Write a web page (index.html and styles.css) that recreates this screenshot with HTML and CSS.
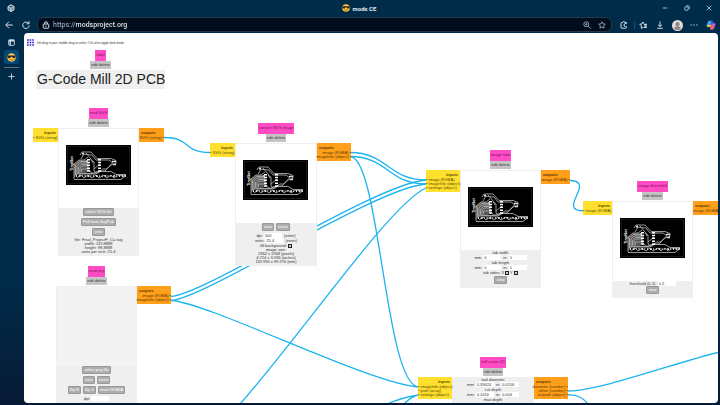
FILE: index.html
```
<!DOCTYPE html>
<html lang="en">
<head>
<meta charset="utf-8">
<title>mods CE</title>
<link rel="stylesheet" href="styles.css">
</head>
<body>
<svg class="defs" aria-hidden="true">
  <symbol id="cool" viewBox="0 0 16 16">
    <circle cx="8" cy="8" r="7.5" fill="#ffc83d"/>
    <path d="M0.8 4.500h14.4v1.5c0 4-5.6 4.2-6.4.7H7.2C6.400 10.200.8 10 .8 6z" fill="#2b2330"/>
    <path d="M4.500 11.500q3.500 3 7 0" fill="none" stroke="#8a4a10" stroke-width="1.400"/>
  </symbol>
  <symbol id="pcb" viewBox="0 0 65 40">
    <rect width="65" height="40" fill="#000"/>
    <rect x="1.500" y="1.500" width="62" height="37" fill="none" stroke="#3a3a3a" stroke-width=".4"/>
    <path d="M8 33V19l5-4h8l2 4v7l-5 3h-6z" fill="#555"/>
    <g fill="none" stroke="#aaa" stroke-width=".9">
      <path d="M14 10l2-3h9l6 6.500h14l5 2v3l-5 1.500-6 6h-5l-4 3H10"/>
      <path d="M16 9l10 1 4 5h13l4 3"/>
      <path d="M15 14l3-5M20 8l5 6 2 4"/>
      <path d="M8 34V19l5-4h5l4-3"/>
      <path d="M9.500 30V20l4-3.500h7"/>
      <path d="M11 29v-8l3-3h7"/>
      <path d="M12.500 28v-6l3-2.500h6"/>
      <path d="M14 27.500V23l2-2h6"/>
      <path d="M15.500 27v-3h7l3 4h7l4-4h4l6-6"/>
      <path d="M13 28.500h15l3-2h14l5 3h8"/>
      <path d="M8 34.500h47l5-4"/>
      <path d="M25 15l3 2v9l3 2M28 24l6-5"/>
      <path d="M11 33l4-3 3 3 4-3 4 3 4-3 3 3 5-3 3 3 4-3 3 3 5-3 4 1"/>
    </g>
    <path d="M10 31h51" stroke="#ddd" stroke-width="2.200" stroke-dasharray="1 1.800 1.700 1.400 .7 2"/>
    <path d="M22.500 14v13M33.500 14v13" stroke="#fff" stroke-width="3" stroke-dasharray="1.500 1.300"/>
    <path d="M16 8.500h2M46 16.500h4M47 19.500h3M20 16h2M59 29v3" stroke="#ddd" stroke-width="1.500"/>
    <text transform="translate(7 26) rotate(-90)" class="silk">TinyBot</text>
  </symbol>
</svg>
<div class="browser">
  <header class="titlebar">
    <button class="icon workspaces" aria-label="Workspaces"><svg viewBox="0 0 16 16"><path d="M2 5l6-3.500L14 5v6.500L8 15l-6-3.500zM2 5l6 3.500L14 5M8 8.500V15" fill="#6d7f90"/></svg></button>
    <div class="tab-title"><svg class="face"><use href="#cool"/></svg><span>mods CE</span></div>
    <div class="window-buttons">
      <button class="icon" aria-label="Minimize"><svg viewBox="0 0 16 16"><path d="M2 8h12"/></svg></button>
      <button class="icon" aria-label="Restore"><svg viewBox="0 0 16 16"><rect x="2" y="5" width="9" height="9" rx="1.500"/><path d="M5.500 2H11q3 0 3 3v6"/></svg></button>
      <button class="icon" aria-label="Close"><svg viewBox="0 0 16 16"><path d="M2 2l12 12M14 2L2 14"/></svg></button>
    </div>
  </header>
  <nav class="toolbar">
    <button class="icon" aria-label="Back"><svg viewBox="0 0 16 16"><path d="M15.500 8H1.500M8 1.500L1.500 8 8 14.500"/></svg></button>
    <button class="icon" aria-label="Reload"><svg viewBox="0 0 16 16"><path d="M13.500 5A6.500 6.500 0 1 0 14.500 9M14 .5V5.500H9"/></svg></button>
    <div class="address">
      <svg viewBox="0 0 16 16"><rect x="2.500" y="6" width="11" height="8.500" rx="1.500"/><path d="M5 6V4.500a3 3 0 0 1 6 0V6M8 9v2.500"/></svg>
      <input class="url" type="text" aria-label="Address" value="https://modsproject.org">
      <button class="icon" aria-label="Zoom"><svg viewBox="0 0 16 16"><circle cx="6.500" cy="6.500" r="5"/><path d="M10 10l5 5M4 6.500h5M6.500 4v5"/></svg></button>
      <button class="icon" aria-label="Favorite"><svg viewBox="0 0 16 16"><path d="M8 1.500l2 4.300 4.700.6-3.500 3.200.9 4.700L8 12l-4.100 2.300.9-4.700L1.300 6.400 6 5.800z"/></svg></button>
    </div>
    <div class="tools">
      <button class="icon" aria-label="Extensions"><svg viewBox="0 0 16 16"><path d="M13 5V3H9.500a2 2 0 0 0-4 0H4Q2 3 2 5v7.500q0 2 2 2h7q2 0 2-2v-1.500H11a2.500 2.500 0 0 1 0-6z"/></svg></button>
      <span class="divider"></span>
      <button class="icon" aria-label="Favorites"><svg viewBox="0 0 16 16"><path d="M9 12.500L4.500 14.500 5 10 1.500 6.500l4.500-.5L8 2l2 3.500M10 7h5M10 10h5M10 13h5"/><path d="M14 5v9"/></svg></button>
      <button class="icon" aria-label="Downloads"><svg viewBox="0 0 16 16"><path d="M8 1v10M4 7.500L8 11l4-3.500M2.500 14.500h11"/></svg></button>
      <button class="icon profile" aria-label="Profile"><svg viewBox="0 0 16 16"><circle cx="8" cy="8" r="8" fill="#e2dfdc" stroke="none"/><circle cx="8" cy="6" r="3" fill="#8b8580" stroke="none"/><path d="M3 13q0-4 5-4t5 4q-5 3-10 0" fill="#8b8580" stroke="none"/></svg></button>
      <button class="icon" aria-label="More"><svg viewBox="0 0 16 16"><path d="M1 8h2.500M6.700 8h2.500M12.400 8h2.500"/></svg></button>
      <button class="icon copilot" aria-label="Copilot"><svg viewBox="0 0 16 16"><g stroke="none"><path d="M5 1h5l-3 10H2Q0 11 1 8l2-5q.5-2 2-2z" fill="#2fa8e8"/><path d="M2 8h6l-1 3H3q-2 0-1-3z" fill="#f5c33b"/><path d="M11 15H6L9 5h5q2 0 1 3l-2 5q-.500 2-2 2z" fill="#d05bd0"/><path d="M7 12l1-4 4 1-1 6H8z" fill="#f0654a"/><path d="M7 1h4l1.500 4H9z" fill="#275bd8"/></g></svg></button>
    </div>
  </nav>
  <aside class="sidebar">
    <button class="icon" aria-label="Tab actions"><svg viewBox="0 0 16 16"><rect x="1.500" y="1.500" width="13" height="13" rx="2"/><path d="M2 4h12M5 4v10" stroke-width="3"/></svg></button>
    <button class="icon current" aria-label="mods CE"><svg class="face"><use href="#cool"/></svg></button>
    <span class="rule"></span>
    <button class="icon" aria-label="New tab"><svg viewBox="0 0 16 16"><path d="M8 1v14M1 8h14"/></svg></button>
  </aside>

  <main class="canvas">
    <div class="hint">
      <button class="menu" aria-label="Menu"><svg viewBox="0 0 7 7"><path d="M0 1h7M0 3.500h7M0 6h7" stroke="#2a20d8" stroke-width="1.600" stroke-dasharray="1.700 .9"/></svg></button>
      <span>left-drag to pan, middle-drag to select, Ctrl+d to toggle dark mode</span>
    </div>

    <svg class="wires" viewBox="24 33 694 370" aria-hidden="true">
      <path d="M164 137.500C192 137.500 182 152.500 210 152.500"/>
      <path d="M350 152.500C388 152.500 388 180 426 180"/>
      <path d="M350 156.500C388 156.500 388 184 426 184"/>
      <path d="M350 156.500C380 156.500 385 387 419 387"/>
      <path d="M171 296.500C206 294 375 184 426 180"/>
      <path d="M171 300.500C206 298 375 188 426 184"/>
      <path d="M171 300.500C210 303 370 384 419 387"/>
      <path d="M240 404C300 337 390 204 426 188"/>
      <path d="M389 403Q408 396 419 395M405 403Q412 396 419 395"/>
      <path d="M569 180.500C598 180.500 555 211 584 211"/>
      <path d="M568 391C600 391 680 361 720 352"/>
      <path d="M568 395Q580 394 588 404"/>
    </svg>

    <section class="node title-node">
      <header><h2>label</h2><div class="edit"><button>edit</button> <button>delete</button></div></header>
      <h1>G-Code Mill 2D PCB</h1>
    </section>

    <section class="node read-svg">
      <header><h2>read SVG</h2><div class="edit"><button>edit</button> <button>delete</button></div></header>
      <div class="port in small"><b>inputs</b><span>• SVG (string)</span></div>
      <div class="port out small"><b>outputs</b><span>SVG (string) •</span></div>
      <div class="body">
        <div class="view"><svg><use href="#pcb"/></svg></div>
        <div class="buttons"><button>select SVG file</button></div>
        <div class="buttons"><button>Pull from SvgPub</button></div>
        <div class="buttons"><button>view</button></div>
        <p>file: Final_ProjectF_Cu.svg</p><p>width: 119.8888</p><p>height: 98.8888</p><p>units per inch: 25.4</p>
      </div>
    </section>

    <section class="node convert">
      <header><h2>convert SVG image</h2><div class="edit"><button>edit</button> <button>delete</button></div></header>
      <div class="port in small"><b>inputs</b><span>• SVG (string)</span></div>
      <div class="port out large"><b>outputs</b><span>image (RGBA) •</span><span>imageInfo (object) •</span></div>
      <div class="body">
        <div class="view"><svg><use href="#pcb"/></svg></div>
        <div class="buttons"><button>view</button><button>invert</button></div>
        <div class="row"><label>dpi: <input type="text" value="500"></label> (enter)</div>
        <div class="row"><label>units: <input type="text" value="25.4"></label> (enter)</div>
        <div class="row"><label>fill background: <input type="checkbox" checked></label></div>
        <p>image size:</p><p>2362 x 1968 (pixels)</p><p>4.724 x 3.936 (inches)</p><p>119.990 x 99.974 (mm)</p>
      </div>
    </section>

    <section class="node tabs">
      <header><h2>image tabs</h2><div class="edit"><button>edit</button> <button>delete</button></div></header>
      <div class="port in large"><b>inputs</b><span>• image (RGBA)</span><span>• imageInfo (object)</span><span>• settings (object)</span></div>
      <div class="port out medium"><b>outputs</b><span>image (RGBA) •</span></div>
      <div class="body">
        <div class="view"><svg><use href="#pcb"/></svg></div>
        <div class="row">tab width</div>
        <div class="row"><label>mm: <input type="text" value="0"></label><label>in: <input type="text" value="0"></label></div>
        <div class="row">tab length</div>
        <div class="row"><label>mm: <input type="text" value="0"></label><label>in: <input type="text" value="0"></label></div>
        <div class="row tight"><label>tab sides: X<input type="checkbox" checked></label><label>Y<input type="checkbox" checked></label></div>
        <div class="buttons"><button>view</button></div>
      </div>
    </section>

    <section class="node threshold">
      <header><h2>image threshold</h2><div class="edit"><button>edit</button> <button>delete</button></div></header>
      <div class="port in medium"><b>inputs</b><span>• image (RGBA)</span></div>
      <div class="port out medium"><b>outputs</b><span>image (RGBA) •</span></div>
      <div class="body">
        <div class="view"><svg><use href="#pcb"/></svg></div>
        <div class="row"><label>threshold (0-1): <input type="text" value="0.5"></label></div>
        <div class="buttons"><button>view</button></div>
      </div>
    </section>

    <section class="node read-png">
      <header><h2>read png</h2><div class="edit"><button>edit</button> <button>delete</button></div></header>
      <div class="port out large"><b>outputs</b><span>image (RGBA) •</span><span>imageInfo (object) •</span></div>
      <div class="body">
        <div class="view empty"></div>
        <div class="buttons"><button>select png file</button></div>
        <div class="buttons"><button>view</button><button>invert</button></div>
        <div class="buttons"><button>flip H</button><button>flip V</button><button>invert RGB/A</button></div>
        <div class="row"><label>dpi: <input type="text"></label></div>
      </div>
    </section>

    <section class="node raster">
      <header><h2>mill raster 2D</h2><div class="edit"><button>edit</button> <button>delete</button></div></header>
      <div class="port in large"><b>inputs</b><span>• imageInfo (object)</span><span>• path (array)</span><span>• settings (object)</span></div>
      <div class="port out large"><b>outputs</b><span>diameter (number) •</span><span>offset (number) •</span><span>outpath (object) •</span></div>
      <div class="body">
        <div class="row">tool diameter</div>
        <div class="row"><label>mm: <input type="text" value="0.39624"></label><label>in: <input type="text" value="0.0156"></label></div>
        <div class="row">cut depth</div>
        <div class="row"><label>mm: <input type="text" value="0.1016"></label><label>in: <input type="text" value="0.004"></label></div>
        <div class="row">max depth</div>
      </div>
    </section>
  </main>
</div>
</body>
</html>
```
FILE: styles.css
```
* { box-sizing: border-box; margin: 0; }
body {
  background: #002b49;
  color: #333;
  font-family: "Liberation Sans", sans-serif;
}
button, input { font: inherit; color: inherit; border: 0; padding: 0; background: none; }
.defs { display: none; }
.silk { font: bold 4px "Liberation Sans", sans-serif; fill: #fff; }

/* Browser frame */
.browser {
  display: grid;
  grid-template: 16px 17px 1fr / 24px 1fr;
  height: 100vh;
  padding: 0 2px 2px 0;
  background: linear-gradient(#002b49 70%, #071a35);
  font-family: Roboto, sans-serif;
}
.icon { display: grid; place-items: center; width: 10px; height: 10px; flex: none; }
.icon svg, .address > svg {
  width: 8px; height: 8px;
  fill: none; stroke: #d3dde5; stroke-width: 2;
}
.titlebar {
  grid-column: 1 / -1;
  display: grid;
  grid-template-columns: 1fr auto 1fr;
  align-items: center;
}
.workspaces { margin-left: 6px; }
.tab-title { display: flex; align-items: center; gap: 3px; color: #e4ecf2; font-size: 6px; font-weight: 700; }
.face { width: 8px; height: 8px; }
.window-buttons { display: flex; justify-content: flex-end; gap: 12px; padding-right: 4px; }
.window-buttons svg { width: 6px; height: 6px; }
.toolbar {
  grid-column: 1 / -1;
  display: flex;
  align-items: center;
  gap: 7px;
  padding-left: 4px;
}
.toolbar > .address {
  flex: 1;
  display: flex;
  align-items: center;
  gap: 5px;
  height: 15px;
  margin-left: -1px;
  padding: 0 4px;
  border: 1px solid #26394c;
  border-radius: 6px;
  background: #000e1c;
}
.address svg { flex: none; }
.address .icon svg { stroke: #8c9aa6; }
.url {
  flex: 1;
  min-width: 0;
  height: 10px;
  margin-left: -2px;
  font-size: 7px;
  font-weight: 500;
  color: transparent;
  background: linear-gradient(90deg, #9aa8b4 22px, #f2f5f8 22px);
  background-clip: text;
}
.tools { display: flex; align-items: center; gap: 7px; padding-right: 2px; }
.divider { width: 1px; height: 8px; margin: 0 -4px 0 -2px; background: #1d4c70; }
.tools .profile svg { width: 11px; height: 11px; }
.tools .copilot svg { width: 10px; height: 10px; }
.sidebar { display: flex; flex-direction: column; align-items: center; gap: 4px; padding: 4px 2px 0 0; }
.sidebar .current { width: 15px; height: 14px; border-radius: 3px; background: #004a78; margin-top: -1px; }
.sidebar .rule { width: 15px; height: 1px; margin: -1px 0; background: #60707c; }
.sidebar .icon svg { width: 7px; height: 7px; }
.sidebar .current svg { width: 9px; height: 9px; stroke: none; }

/* Program canvas */
.canvas {
  position: relative;
  overflow: hidden;
  border-radius: 4px;
  background: #fff;
  font: 4px/4px "Liberation Sans", sans-serif;
}
.hint { display: flex; align-items: center; gap: 3px; padding: 6px 3px; font-size: 3px; }
.menu { width: 7px; height: 7px; }
.menu svg { display: block; width: 7px; height: 7px; }
.wires { position: absolute; left: 0; top: 0; width: 694px; height: 370px; }
.wires path { fill: none; stroke: #1cb4ee; stroke-width: 1.300; }

.node { position: absolute; width: 81px; }
.title-node { left: 12px; top: 17px; width: 129px; }
.read-svg { left: 34px; top: 75px; }
.convert { left: 211px; top: 90px; width: 82px; }
.tabs { left: 436px; top: 117px; }
.threshold { left: 588px; top: 148px; }
.read-png { left: 32px; top: 233px; }
.raster { left: 428px; top: 324px; width: 82px; }

.node header { display: flex; flex-direction: column; align-items: center; height: 20px; }
.node h2 {
  padding: 3px 1px 4px;
  background: #ff4cc4;
  color: #7a1260;
  font-size: 4px;
  font-weight: 400;
  white-space: nowrap;
}
.edit { padding: 2px 1px; background: #c4c4c4; white-space: nowrap; }
.edit button { display: inline; line-height: 4px; vertical-align: top; }
.node h1 {
  padding: 0 1px;
  background: #efefef;
  color: #222;
  font-size: 14px;
  font-weight: 400;
  line-height: 19px;
  text-align: center;
  white-space: nowrap;
}
.body { padding: 0 1px 2px; background: #efefef; text-align: center; }
.view { height: 80px; padding: 16px 7px; background: #fff; border-top: 1px solid #efefef; }
.view svg { display: block; width: 65px; height: 40px; }
.view.empty { background: #f3f3f3; }
.body p { white-space: nowrap; }
.buttons { display: flex; justify-content: center; gap: 2px; padding-bottom: 2px; }
.buttons button {
  height: 8px;
  padding: 0 1px;
  border: 1px solid #999;
  border-radius: 1px;
  background: #adadad;
  color: #fff;
  line-height: 4px;
  white-space: nowrap;
}
.row { display: flex; justify-content: center; align-items: center; gap: 2px; height: 5px; white-space: nowrap; }
.convert .row { height: 5px; }
.row label { display: flex; align-items: center; gap: 1px; }
.row input[type="text"] { width: 18px; height: 5px; padding-left: 1px; background: #fff; }
.row input[type="checkbox"] {
  appearance: none;
  width: 4px; height: 4px;
  border: 1px solid #222;
  background: #ccc;
}
.tight { gap: 1px; margin-bottom: 1px; }

.port {
  position: absolute;
  top: 20px;
  display: flex;
  flex-direction: column;
  padding: 3px 0 2px;
  white-space: nowrap;
}
.port b { margin-bottom: 1px; }
.in { right: 100%; background: #ffe02e; color: #5c4c00; align-items: flex-start; }
.in b { align-self: flex-end; padding-right: 2px; }
.out { left: 100%; background: #ff9f1a; color: #633800; align-items: flex-end; }
.out b { align-self: flex-start; padding-left: 2px; }
.small { width: 25px; }
.medium { width: 29px; }
.large { width: 34px; }
```
